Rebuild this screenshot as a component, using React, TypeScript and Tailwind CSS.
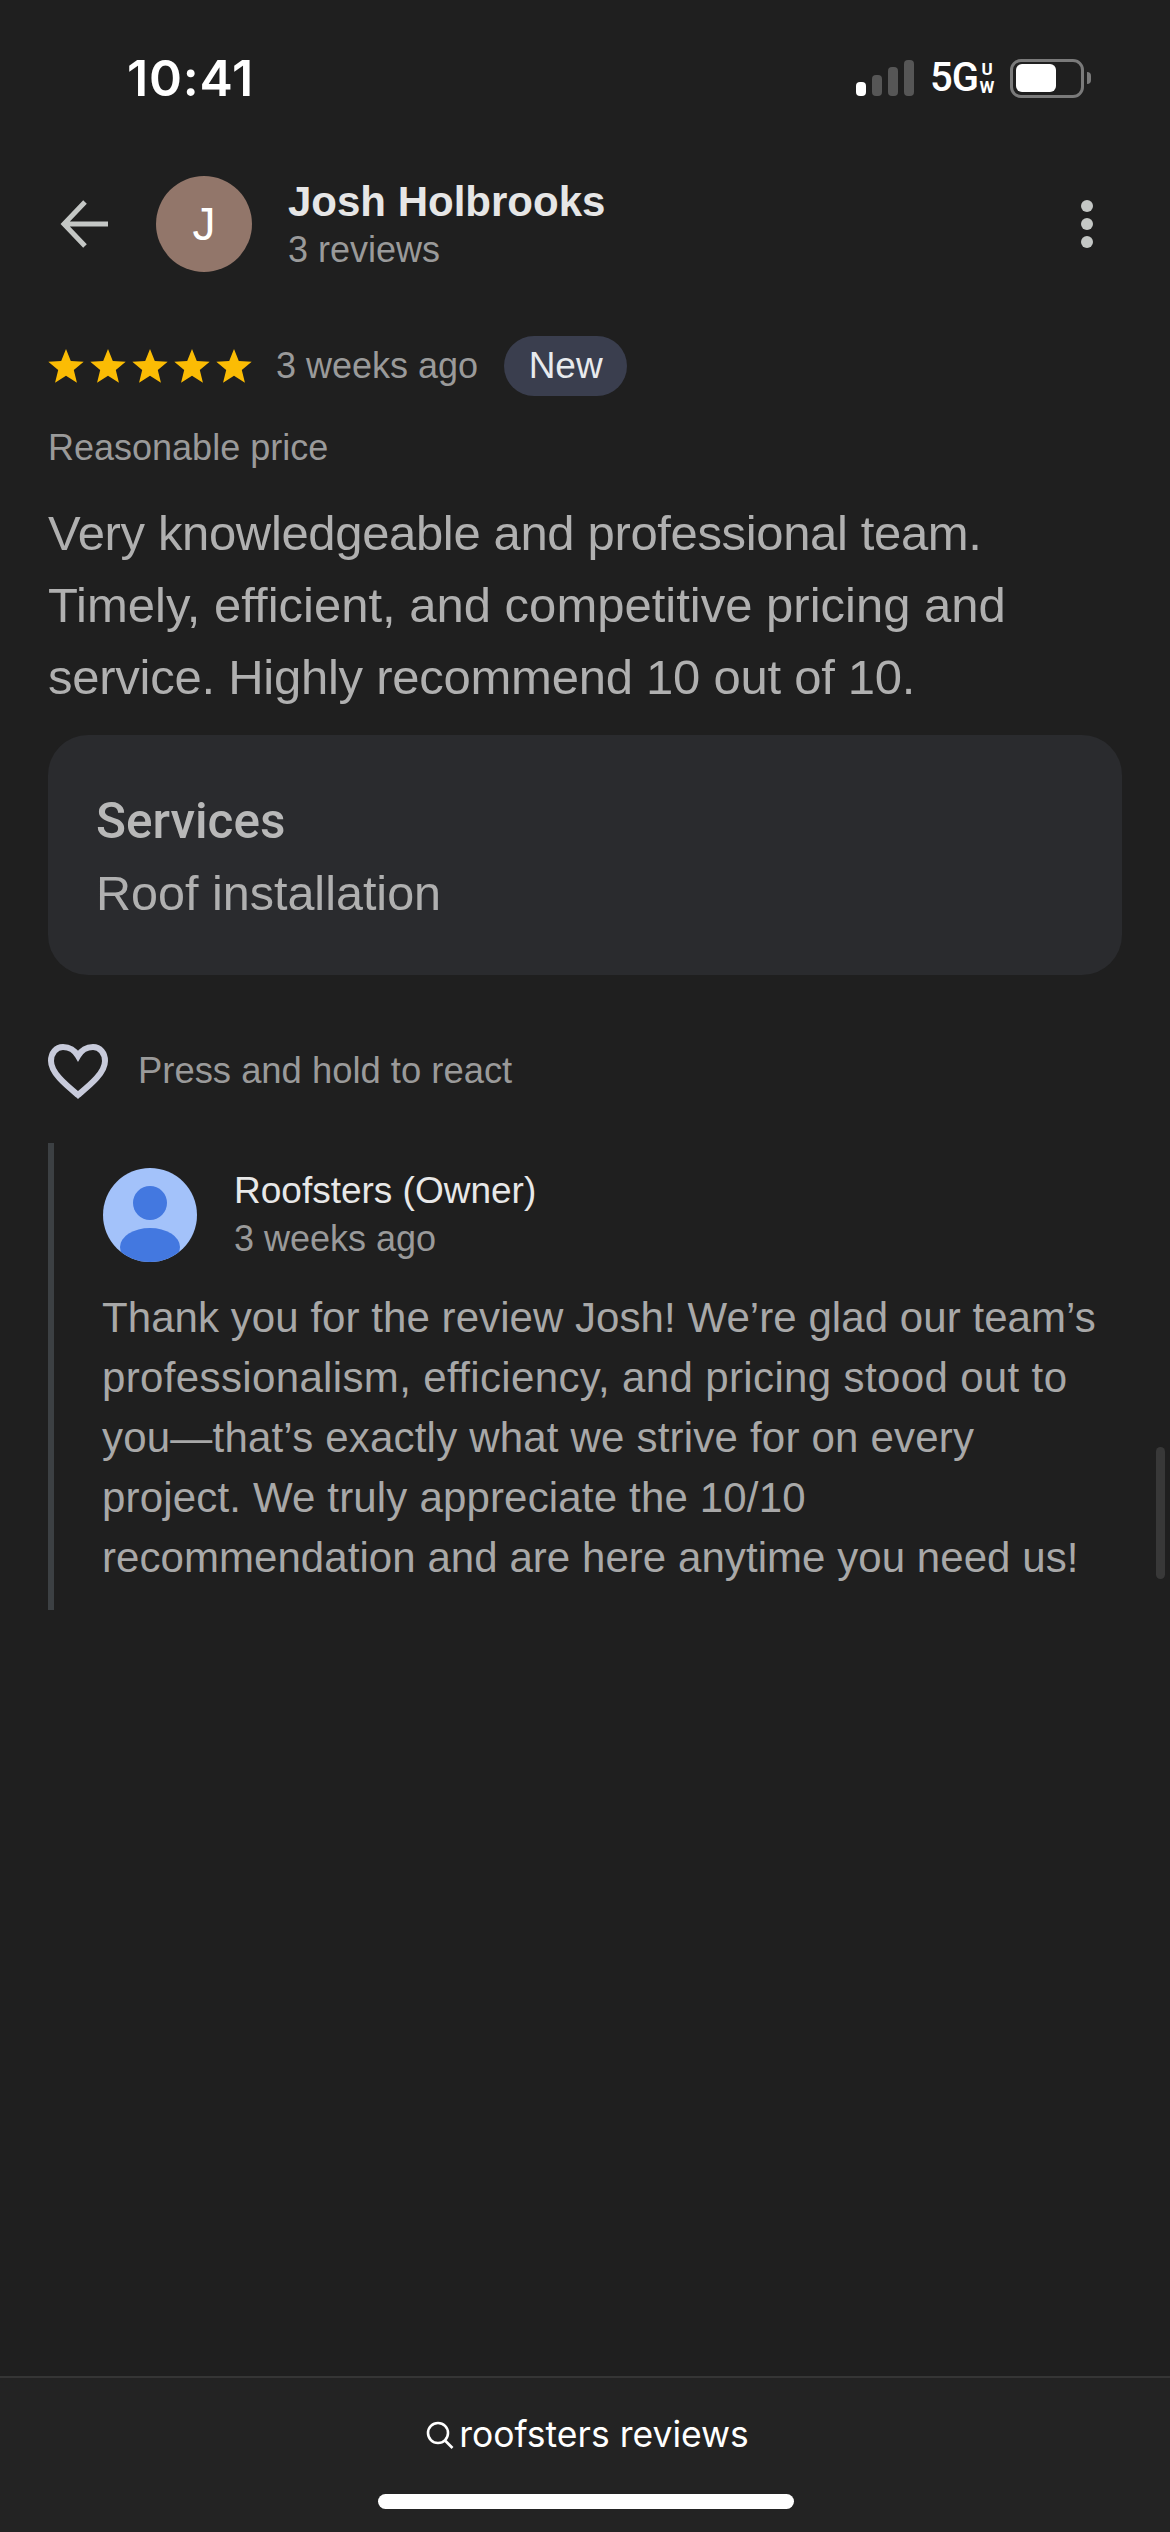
const sans = "font-['Liberation_Sans',Arial,sans-serif]";

function StatusBar() {
  return (
    <div className="flex h-[156px] items-center justify-between pl-[127px] pr-[79px]">
      <span className="font-['Inter',sans-serif] text-[50px] font-semibold leading-none tracking-[0.8px] text-white">10:41</span>
      <div className="flex items-center">
        <div className="flex items-end gap-[6px]">
          <span className="h-[14px] w-[10px] rounded-[4px] bg-white" />
          <span className="h-[21px] w-[10px] rounded-[4px] bg-[#565656]" />
          <span className="h-[29px] w-[10px] rounded-[4px] bg-[#565656]" />
          <span className="h-[36px] w-[10px] rounded-[4px] bg-[#565656]" />
        </div>
        <span className="ml-[16px] w-[47px] font-['Roboto',sans-serif] text-[40px] font-medium leading-none tracking-[-1px] text-white">5G</span>
        <div className="ml-[3px] flex w-[14px] flex-col items-center font-['Roboto',sans-serif] text-[17px] font-bold leading-[18px] text-white">
          <span>U</span>
          <span>W</span>
        </div>
        <div className="ml-[16px] flex h-[39px] w-[74px] items-center rounded-[11px] border-[3px] border-[#7a7a7a] px-[3px]">
          <span className="h-[28px] w-[40px] rounded-[6px] bg-white" />
        </div>
        <span className="ml-[3px] h-[12px] w-[4px] rounded-r-full bg-[#7a7a7a]" />
      </div>
    </div>
  );
}

function Star() {
  return (
    <svg viewBox="0 0 24 24" className="h-[36px] w-[36px] fill-[#fbbc04]">
      <path d="M12 .6 15.2 8.6 23.8 9.2 17.2 14.7 19.3 23.1 12 18.5 4.7 23.1 6.8 14.7.2 9.2 8.8 8.6Z" />
    </svg>
  );
}

export default function App() {
  return (
    <div className={`relative flex h-[2532px] w-[1170px] flex-col overflow-hidden bg-[#1f1f1f] ${sans}`}>
      <StatusBar />

      <div className="flex h-[136px] items-center pl-[60px] pr-[77px]">
        <svg viewBox="0 0 48 48" className="h-[48px] w-[48px] fill-none stroke-[#c4c7c5] stroke-[5]">
          <path d="M48 24H5M25 2 4 24 25 46" />
        </svg>
        <div className="ml-[48px] flex h-[96px] w-[96px] items-center justify-center rounded-full bg-[#92766a] text-[46px] text-white">J</div>
        <div className="ml-[36px] flex flex-1 flex-col">
          <span className="text-[42px] font-bold leading-[52px] text-[#e6e6e6]">Josh Holbrooks</span>
          <span className="text-[36px] leading-[44px] text-[#9a9a9a]">3 reviews</span>
        </div>
        <div className="flex flex-col gap-[6px]">
          <span className="h-[12px] w-[12px] rounded-full bg-[#c4c7c5]" />
          <span className="h-[12px] w-[12px] rounded-full bg-[#c4c7c5]" />
          <span className="h-[12px] w-[12px] rounded-full bg-[#c4c7c5]" />
        </div>
      </div>

      <div className="px-[48px] pt-[44px]">
        <div className="flex items-center">
          <div className="flex gap-[6px]">
            <Star />
            <Star />
            <Star />
            <Star />
            <Star />
          </div>
          <span className="ml-[24px] text-[36px] leading-none text-[#9a9a9a]">3 weeks ago</span>
          <span className="ml-[26px] flex h-[60px] w-[123px] items-center justify-center rounded-full bg-[#3a3e4e] text-[37px] text-[#e8eaed]">New</span>
        </div>
        <p className="mt-[30px] text-[36px] leading-[44px] text-[#9a9a9a]">Reasonable price</p>
        <div className="mt-[27px] text-[49px] leading-[72px] text-[#b0b0b0]">
          <p className="tracking-[-0.35px]">Very knowledgeable and professional team.</p>
          <p>Timely, efficient, and competitive pricing and</p>
          <p className="tracking-[-0.25px]">service. Highly recommend 10 out of 10.</p>
        </div>
        <div className="mt-[22px] flex h-[240px] flex-col justify-center rounded-[40px] bg-[#2a2b2e] px-[48px] pt-[3px]">
          <span className="font-['Roboto',sans-serif] text-[49.5px] font-medium leading-[72px] text-[#b8b8b8]">Services</span>
          <span className="text-[48.5px] leading-[72px] text-[#b0b0b0]">Roof installation</span>
        </div>
        <div className="mt-[68px] flex items-center">
          <svg viewBox="0 0 60 56" className="h-[56px] w-[60px] fill-none stroke-[#c8cbdb] stroke-[6]">
            <path d="M30 13C26 6 20 4 15 4 8 4 3 10 3 18 3 30 18 42 30 52 42 42 57 30 57 18 57 10 52 4 45 4 40 4 34 6 30 13Z" />
          </svg>
          <span className="ml-[30px] text-[36.4px] leading-none text-[#9a9a9a]">Press and hold to react</span>
        </div>
        <div className="mt-[44px] border-l-[6px] border-[#3c4043] pb-[22px] pl-[48px] pt-[24px]">
          <div className="flex items-center">
            <svg viewBox="0 0 96 96" className="h-[96px] w-[96px]">
              <defs>
                <clipPath id="owner">
                  <circle cx="48" cy="48" r="47" />
                </clipPath>
              </defs>
              <g clipPath="url(#owner)">
                <rect width="96" height="96" fill="#a3c2fa" />
                <circle cx="48" cy="36" r="17" fill="#4378e0" />
                <ellipse cx="48" cy="80" rx="30" ry="19" fill="#4378e0" />
              </g>
            </svg>
            <div className="ml-[36px] flex flex-col">
              <span className="text-[37px] leading-[48px] text-[#e8e8e8]">Roofsters (Owner)</span>
              <span className="text-[36px] leading-[48px] text-[#9a9a9a]">3 weeks ago</span>
            </div>
          </div>
          <div className="mt-[25px] text-[42px] leading-[60px] text-[#a8a8a8]">
            <p className="tracking-[0.06px]">Thank you for the review Josh! We’re glad our team’s</p>
            <p className="tracking-[0.36px]">professionalism, efficiency, and pricing stood out to</p>
            <p className="tracking-[0.2px]">you—that’s exactly what we strive for on every</p>
            <p className="tracking-[0.17px]">project. We truly appreciate the 10/10</p>
            <p className="tracking-[0.06px]">recommendation and are here anytime you need us!</p>
          </div>
        </div>
      </div>

      <div className="absolute right-[5px] top-[1447px] h-[132px] w-[9px] rounded-full bg-[#383838]" />

      <div className="mt-auto flex h-[156px] flex-col items-center border-t-[2px] border-[#353535] bg-[#232323]">
        <div className="ml-[5px] mt-[33px] flex items-center text-white">
          <svg viewBox="0 0 28 28" className="h-[28px] w-[28px] fill-none stroke-white stroke-[2.6]">
            <circle cx="12" cy="12" r="10" />
            <path d="M18.5 19l8 8" />
          </svg>
          <span className="ml-[5px] font-['Inter',sans-serif] text-[35.5px] leading-[48px]">roofsters reviews</span>
        </div>
        <div className="ml-[2px] mt-[35px] h-[15px] w-[416px] rounded-full bg-white" />
      </div>
    </div>
  );
}
